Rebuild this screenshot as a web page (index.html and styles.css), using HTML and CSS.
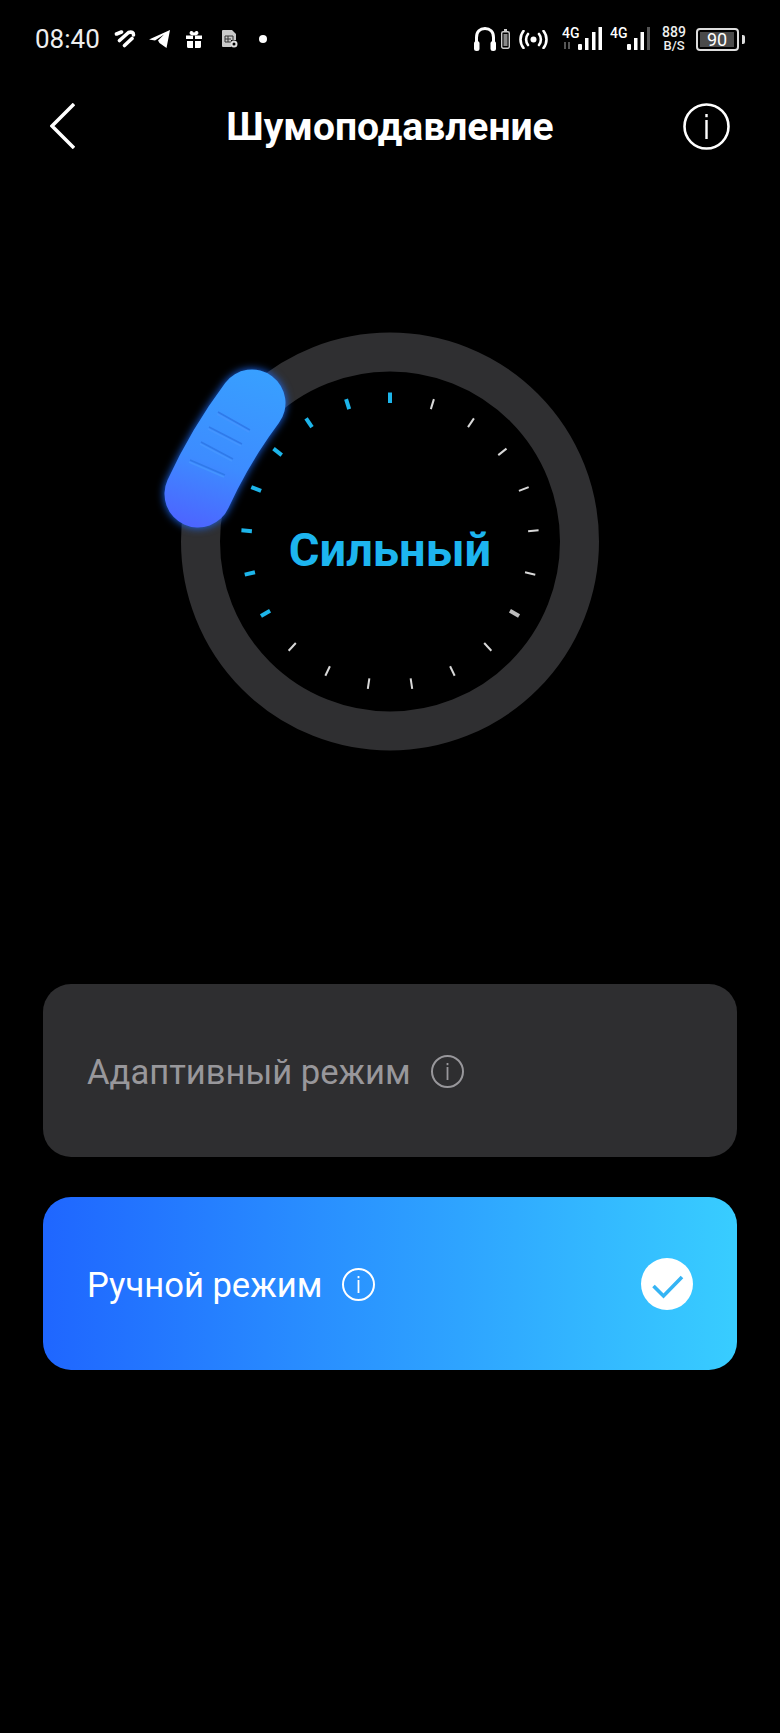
FILE: index.html
```html
<!DOCTYPE html>
<html lang="ru">
<head>
    <meta charset="UTF-8">
    <title>Шумоподавление</title>
    <link rel="stylesheet" href="styles.css">
</head>
<body>
    <div class="statusbar">
        <div class="status-group">
            <span class="time">08:40</span>
            <svg class="st-heart" viewBox="0 0 22 18" width="22" height="18">
                <path d="M2.500 4 L7.500 2 M5.500 10.500 L14.500 2.500 Q19.500 1 19.500 5 M10.500 15.500 L18 8.500" fill="none" stroke="#fff" stroke-width="3.600" stroke-linecap="round"/>
            </svg>
            <svg class="st-plane" viewBox="0 0 21 18" width="21" height="18">
                <path d="M0 9.500 L21 0 L17.500 18 L10.500 13 L9 10.500 L15 4.500 L6 10.500 Z" fill="#fff"/>
            </svg>
            <svg class="st-gift" viewBox="0 0 16 17" width="16" height="17">
                <path d="M0 4.500 H7 V8 H0 Z M9 4.500 H16 V8 H9 Z M1 10 H7 V17 H2.500 Q1 17 1 15.500 Z M9 10 H15 V15.500 Q15 17 13.500 17 H9 Z" fill="#fff"/>
                <path d="M8 4 C5 4 3.500 2.500 4.500 1 C5.500 0 7.500 1 8 4 C8.500 1 10.500 0 11.500 1 C12.500 2.500 11 4 8 4 Z" fill="#fff" stroke="#fff" stroke-width="1.200"/>
            </svg>
            <svg class="st-sim" viewBox="0 0 16 18" width="16" height="18">
                <path d="M1 0 H10 L14 4 V10 H9 V17 H1 Q0 17 0 16 V1 Q0 0 1 0 Z" fill="#c9c9c9"/>
                <path d="M3 6 H11 V12 H3 Z M3 9 H9 M6 6 V12" stroke="#333" stroke-width="1" fill="none"/>
                <circle cx="12" cy="14" r="2.500" fill="none" stroke="#ddd" stroke-width="2"/>
            </svg>
            <span class="st-dot"></span>
        </div>
        <div class="status-group">
            <svg class="st-phones" viewBox="0 0 22 24" width="22" height="24">
                <path d="M2.500 16 V10.500 C2.500 4.500 6 1.500 11 1.500 C16 1.500 19.500 4.500 19.500 10.500 V16" fill="none" stroke="#fff" stroke-width="3"/>
                <rect x="0" y="14" width="5.500" height="10" rx="2.500" fill="#fff"/>
                <rect x="16.500" y="14" width="5.500" height="10" rx="2.500" fill="#fff"/>
            </svg>
            <svg class="st-minibat" viewBox="0 0 9 20" width="9" height="20">
                <rect x="3" y="0" width="3" height="2" fill="#ccc"/>
                <rect x="0.700" y="2.700" width="7.600" height="16.600" rx="1.500" fill="none" stroke="#ccc" stroke-width="1.400"/>
                <rect x="2.500" y="5" width="4" height="12" fill="#888"/>
            </svg>
            <svg class="st-hotspot" viewBox="0 0 29 19" width="29" height="19">
                <circle cx="14.500" cy="9.500" r="3" fill="#fff"/>
                <path d="M9 4 C6.500 7 6.500 12 9 15 M20 4 C22.500 7 22.500 12 20 15 M4.500 1 C0.500 6 0.500 13 4.500 18 M24.500 1 C28.500 6 28.500 13 24.500 18" fill="none" stroke="#fff" stroke-width="2.600" stroke-linecap="round"/>
            </svg>
            <svg class="st-net" viewBox="0 -4 40 32" width="40" height="32">
                <text class="net-text" x="0" y="11">4G</text>
                <path d="M3 15 V22 M7 15 V22" stroke="#555" stroke-width="2"/>
                <rect x="16" y="17" width="4" height="6" rx="1" fill="#fff"/>
                <rect x="23" y="11" width="3.500" height="12" fill="#fff"/>
                <rect x="30" y="5" width="3.500" height="18" fill="#fff"/>
                <rect x="36.500" y="0" width="3.500" height="23" fill="#fff"/>
            </svg>
            <svg class="st-net2" viewBox="0 -4 40 32" width="40" height="32">
                <text class="net-text" x="0" y="11">4G</text>
                <rect x="17" y="17" width="4" height="6" rx="1" fill="#fff"/>
                <rect x="24" y="11" width="3.500" height="12" fill="#fff"/>
                <rect x="30.500" y="5" width="3.500" height="18" fill="#fff"/>
                <rect x="37" y="0" width="3.500" height="23" fill="#555"/>
            </svg>
            <div class="speed"><span class="speed-num">889</span><span>B/S</span></div>
            <div class="battery"><div class="battery-body"><span class="battery-fill">90</span></div><span class="battery-nub"></span></div>
        </div>
    </div>

    <div class="navbar">
        <svg class="back" viewBox="0 0 25 46" width="25" height="46">
            <path d="M24 1 L2 23 L24 45" fill="none" stroke="#fff" stroke-width="3.500"/>
        </svg>
        <h1>Шумоподавление</h1>
        <svg class="info-big" viewBox="0 0 47 47" width="47" height="47">
            <circle cx="23.500" cy="23.500" r="22" fill="none" stroke="#fff" stroke-width="2.600"/>
            <rect x="22.300" y="11" width="2.400" height="3.200" fill="#fff"/>
            <rect x="22.300" y="17" width="2.400" height="19" fill="#fff"/>
        </svg>
    </div>

    <div class="dial">
        <svg class="dial-art" viewBox="0 0 480 480" width="480" height="480">
            <defs>
                <linearGradient id="thumbGrad" gradientUnits="userSpaceOnUse" x1="100" y1="68" x2="50" y2="225">
                    <stop offset="0" stop-color="#389fff"/>
                    <stop offset="0.6" stop-color="#3d8cff"/>
                    <stop offset="1" stop-color="#4c66ff"/>
                </linearGradient>
            </defs>
            <circle class="ring" cx="240" cy="239.500" r="189.500"/>

            <g class="ticks-on">
                <line x1="240" y1="90.500" x2="240" y2="101" transform="rotate(0 240 239.500)"/>
                <line x1="240" y1="90.500" x2="240" y2="101" transform="rotate(-17.143 240 239.500)"/>
                <line x1="240" y1="90.500" x2="240" y2="101" transform="rotate(-34.286 240 239.500)"/>
                <line x1="240" y1="90.500" x2="240" y2="101" transform="rotate(-51.429 240 239.500)"/>
                <line x1="240" y1="90.500" x2="240" y2="101" transform="rotate(-68.571 240 239.500)"/>
                <line x1="240" y1="90.500" x2="240" y2="101" transform="rotate(-85.714 240 239.500)"/>
                <line x1="240" y1="90.500" x2="240" y2="101" transform="rotate(-102.857 240 239.500)"/>
                <line x1="240" y1="90.500" x2="240" y2="101" transform="rotate(-120 240 239.500)"/>
            </g>
            <g class="ticks-off">
                <line x1="240" y1="90.500" x2="240" y2="101" transform="rotate(17.143 240 239.500)"/>
                <line x1="240" y1="90.500" x2="240" y2="101" transform="rotate(34.286 240 239.500)"/>
                <line x1="240" y1="90.500" x2="240" y2="101" transform="rotate(51.429 240 239.500)"/>
                <line x1="240" y1="90.500" x2="240" y2="101" transform="rotate(68.571 240 239.500)"/>
                <line x1="240" y1="90.500" x2="240" y2="101" transform="rotate(85.714 240 239.500)"/>
                <line x1="240" y1="90.500" x2="240" y2="101" transform="rotate(102.857 240 239.500)"/>
                <line class="tick-end" x1="240" y1="90.500" x2="240" y2="101" transform="rotate(120 240 239.500)"/>
                <line x1="240" y1="90.500" x2="240" y2="101" transform="rotate(137.143 240 239.500)"/>
                <line x1="240" y1="90.500" x2="240" y2="101" transform="rotate(154.286 240 239.500)"/>
                <line x1="240" y1="90.500" x2="240" y2="101" transform="rotate(171.429 240 239.500)"/>
                <line x1="240" y1="90.500" x2="240" y2="101" transform="rotate(188.571 240 239.500)"/>
                <line x1="240" y1="90.500" x2="240" y2="101" transform="rotate(205.714 240 239.500)"/>
                <line x1="240" y1="90.500" x2="240" y2="101" transform="rotate(222.857 240 239.500)"/>
            </g>

            <path class="thumb" d="M102 101 A500 500 0 0 0 48 192" stroke="url(#thumbGrad)"/>
            <path class="ridge-light" d="M67 112 L99 130 M58 127 L91 144 M50 142 L82 159 M39 160 L74 175"/>
            <path class="ridge" d="M68 110 L100 128 M59 125 L92 142 M51 140 L83 157 M40 158 L75 173"/>
        </svg>
        <div class="dial-label">Сильный</div>
    </div>

    <div class="modes">
        <div class="mode">
            <span class="mode-name">Адаптивный режим</span>
            <svg class="info-small" viewBox="0 0 33 33" width="33" height="33">
                <circle cx="16.500" cy="16.500" r="15.500" fill="none" stroke="currentColor" stroke-width="2"/>
                <rect x="15.600" y="8" width="1.800" height="2.200" fill="currentColor"/>
                <rect x="15.600" y="12" width="1.800" height="13" fill="currentColor"/>
            </svg>
        </div>
        <div class="mode mode-active">
            <span class="mode-name">Ручной режим</span>
            <svg class="info-small" viewBox="0 0 33 33" width="33" height="33">
                <circle cx="16.500" cy="16.500" r="15.500" fill="none" stroke="currentColor" stroke-width="2"/>
                <rect x="15.600" y="8" width="1.800" height="2.200" fill="currentColor"/>
                <rect x="15.600" y="12" width="1.800" height="13" fill="currentColor"/>
            </svg>
            <svg class="check" viewBox="0 0 52 52" width="52" height="52">
                <circle cx="26" cy="26" r="26" fill="#fff"/>
                <path d="M12.500 28 L22.500 38 L41 19" fill="none" stroke="#35b4f4" stroke-width="3.600"/>
            </svg>
        </div>
    </div>
</body>
</html>
```

FILE: styles.css
```css
html, body {
    margin: 0;
    background: #000;
}
body {
    width: 780px;
    height: 1733px;
    overflow: hidden;
    color: #fff;
    font-family: Roboto, "Liberation Sans", sans-serif;
}

/* status bar */
.statusbar {
    display: flex;
    justify-content: space-between;
    align-items: center;
    height: 24px;
    padding: 27px 35px 0 35px;
}
.status-group {
    display: flex;
    align-items: center;
    height: 24px;
}
.time {
    width: 63px;
    font-size: 26px;
    color: #eee;
}
.st-heart { margin-left: 16px; }
.st-plane { margin-left: 13px; }
.st-gift { margin-left: 16px; }
.st-sim { margin-left: 20px; }
.st-dot {
    width: 8px;
    height: 8px;
    margin-left: 21px;
    border-radius: 50%;
    background: #fff;
}
.st-minibat { margin-left: 5px; }
.st-hotspot { margin-left: 9px; }
.st-net { margin-left: 14px; }
.st-net2 { margin-left: 8px; }
.net-text {
    font-size: 14px;
    font-weight: 500;
    fill: #fff;
}
.speed {
    display: flex;
    flex-direction: column;
    align-items: center;
    width: 24px;
    margin-left: 12px;
    font-size: 13px;
    font-weight: 500;
    line-height: 13px;
    color: #eee;
}
.speed-num { font-size: 14px; }
.battery {
    display: flex;
    align-items: center;
    margin-left: 10px;
}
.battery-body {
    width: 35px;
    height: 15px;
    padding: 2px;
    border: 2px solid #ddd;
    border-radius: 4px;
}
.battery-fill {
    display: block;
    width: 34px;
    height: 15px;
    background: #4a4a4a;
    font-size: 18px;
    line-height: 15px;
    text-align: center;
}
.battery-nub {
    width: 3px;
    height: 9px;
    margin-left: 3px;
    background: #ddd;
    border-radius: 0 2px 2px 0;
}

/* title row */
.navbar {
    display: grid;
    grid-template-columns: 1fr auto 1fr;
    align-items: center;
    height: 47px;
    margin-top: 51px;
    padding: 0 50px;
}
.back { justify-self: start; }
.info-big { justify-self: end; }
h1 {
    margin: 0;
    padding-top: 2px;
    font-size: 39px;
    font-weight: 700;
    white-space: nowrap;
}

/* dial */
.dial {
    display: grid;
    justify-content: center;
    align-items: center;
    margin-top: 153px;
}
.dial-art, .dial-label {
    grid-area: 1 / 1;
}
.dial-art { display: block; }
.dial-label {
    padding-top: 15px;
    text-align: center;
    font-size: 47px;
    font-weight: 700;
    color: #1db5ef;
}
.ring {
    fill: none;
    stroke: #2f2f31;
    stroke-width: 39;
}
.ticks-on line {
    stroke: #1db5ea;
    stroke-width: 4;
}
.ticks-off line {
    stroke: #d8d8d8;
    stroke-width: 2;
}
.ticks-off .tick-end {
    stroke: #bdbdbd;
    stroke-width: 4;
}
.thumb {
    fill: none;
    stroke-width: 67;
    stroke-linecap: round;
    filter: drop-shadow(0 0 4px #1c6dff);
}
.ridge, .ridge-light {
    fill: none;
    stroke-width: 1.5;
}
.ridge { stroke: #2f7aea; }
.ridge-light { stroke: #4595ff; }

/* mode cards */
.modes {
    display: flex;
    flex-direction: column;
    gap: 40px;
    margin: 202px 43px 0 43px;
}
.mode {
    display: flex;
    align-items: center;
    gap: 20px;
    height: 173px;
    padding: 0 44px;
    border-radius: 28px;
    background: #2e2e30;
    color: #98979b;
}
.mode-name {
    padding-top: 3px;
    font-size: 34.6px;
    font-weight: 400;
}
.info-small { margin-top: 2px; }
.mode-active {
    background: linear-gradient(to right, #1f66ff, #38cdff);
    color: #fff;
}
.check { margin-left: auto; }
```
